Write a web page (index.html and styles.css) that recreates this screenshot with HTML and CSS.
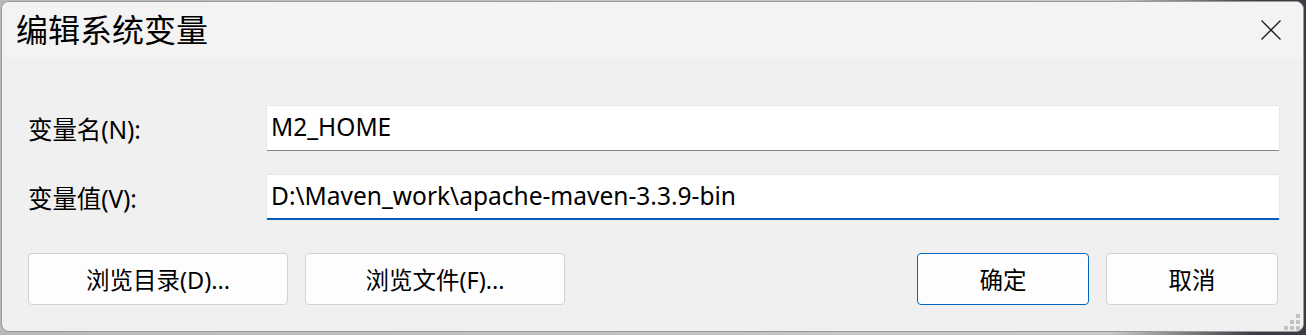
FILE: index.html
```html
<!DOCTYPE html>
<html lang="zh-CN">
<head>
    <meta charset="UTF-8">
    <title>编辑系统变量</title>
    <link rel="stylesheet" href="styles.css">
</head>
<body>
    <div class="dialog">
        <div class="titlebar">
            <span class="title">编辑系统变量</span>
            <button class="close" aria-label="关闭">
                <svg width="20" height="20" viewBox="0 0 20 20">
                    <path d="M0.5 0.5 L19.5 19.5 M19.5 0.5 L0.5 19.5" stroke="#1a1a1a" stroke-width="1.3" fill="none"/>
                </svg>
            </button>
        </div>

        <div class="content">
            <div class="field">
                <label class="label">变量名(N):</label>
                <div class="input">M2_HOME</div>
            </div>
            <div class="field">
                <label class="label">变量值(V):</label>
                <div class="input focused">D:\Maven_work\apache-maven-3.3.9-bin</div>
            </div>

            <div class="buttons">
                <button class="btn wide">浏览目录(D)...</button>
                <button class="btn wide">浏览文件(F)...</button>
                <span class="spacer"></span>
                <button class="btn default">确定</button>
                <button class="btn">取消</button>
            </div>
        </div>

        <div class="grip">
            <i style="grid-area: 1 / 3"></i>
            <i style="grid-area: 2 / 2"></i>
            <i style="grid-area: 2 / 3"></i>
            <i style="grid-area: 3 / 1"></i>
            <i style="grid-area: 3 / 2"></i>
            <i style="grid-area: 3 / 3"></i>
        </div>
    </div>
</body>
</html>
```

FILE: styles.css
```css
body {
    margin: 0;
    height: 335px;
    background: linear-gradient(90deg, #b9b9b9 0%, #c9c9c9 85%, #3a3d44 96%);
    font-family: "Noto Sans", "Noto Sans CJK SC", sans-serif;
    color: #000;
    overflow: hidden;
}

.dialog {
    position: relative;
    margin: 1px 0 0 1px;
    width: 1303px;
    height: 331px;
    background: #f0f0f0;
    border: 1px solid #9a9a9a;
    border-radius: 8px;
    box-sizing: border-box;
    overflow: hidden;
}

.titlebar {
    height: 56px;
    background: #f3f3f3;
    display: flex;
    align-items: center;
    justify-content: space-between;
    padding-left: 14px;
}

.title {
    font-size: 32px;
    font-family: "Noto Sans CJK SC", sans-serif;
    margin-top: -4px;
}

.close {
    border: none;
    background: none;
    padding: 0;
    margin-right: 22px;
    width: 20px;
    height: 20px;
    display: flex;
}

.content {
    padding: 47px 23px 0 26px;
    display: flex;
    flex-direction: column;
    gap: 23px;
}

.field {
    display: flex;
    align-items: center;
}

.label {
    width: 238px;
    font-size: 24.5px;
    letter-spacing: -0.1px;
}

.input {
    flex: 1;
    height: 46px;
    box-sizing: border-box;
    background: #fff;
    border: 1px solid #e6e6e6;
    border-bottom: 1px solid #868686;
    border-radius: 2px;
    font-size: 24.5px;
    padding: 0 4px 4px;
    display: flex;
    align-items: center;
}

.input.focused {
    border-bottom: 2px solid #005fb8;
    padding-bottom: 2px;
}

.buttons {
    display: flex;
    gap: 17px;
    margin: 10px 2px 0 0;
}

.spacer {
    flex: 1;
}

.btn {
    height: 52px;
    width: 172px;
    background: #fdfdfd;
    border: 1px solid #d2d2d2;
    border-radius: 4px;
    font-family: "Noto Sans", "Noto Sans CJK SC", sans-serif;
    font-size: 23.5px;
    color: #000;
    padding: 0;
}

.btn.wide {
    width: 260px;
}

.btn.default {
    border-color: #0067c0;
}

.grip {
    position: absolute;
    right: 3px;
    bottom: 1px;
    display: grid;
    grid-template-columns: repeat(3, 4px);
    grid-template-rows: repeat(3, 4px);
    gap: 2px;
}

.grip i {
    background: #c2c2c2;
}
```
